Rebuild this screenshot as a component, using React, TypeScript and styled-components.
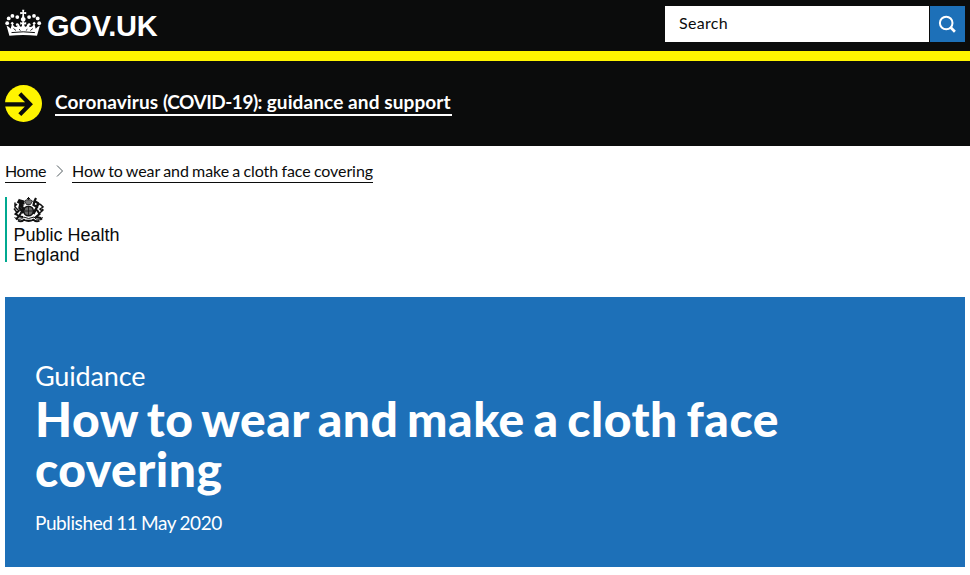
import React from "react";
import styled, { createGlobalStyle } from "styled-components";

const black = "#0b0c0c";
const blue = "#1d70b8";
const yellow = "#fff500";

const GlobalStyle = createGlobalStyle`
  * { box-sizing: border-box; }
  body {
    margin: 0;
    background: #fff;
    color: ${black};
    font-family: Lato, "Liberation Sans", sans-serif;
  }
`;

const Header = styled.header`
  display: flex;
  justify-content: space-between;
  height: 61px;
  padding: 6px 5px 0;
  background: ${black};
  border-bottom: 10px solid ${yellow};
`;

const Logo = styled.a`
  display: flex;
  gap: 5px;
  height: 36px;
  padding-top: 3px;
  color: #fff;
  text-decoration: none;
`;

const LogoText = styled.span`
  font: 700 29px/34px "Liberation Sans", Arial, sans-serif;
  letter-spacing: -0.2px;
`;

const SearchForm = styled.form`
  display: flex;
  gap: 1px;
  height: 36px;
`;

const SearchField = styled.label`
  width: 264px;
  padding-left: 14px;
  background: #fff;
  font-size: 16px;
  line-height: 34px;
  letter-spacing: 0.3px;
`;

const SearchButton = styled.button`
  display: flex;
  align-items: center;
  justify-content: center;
  width: 35px;
  padding: 0;
  border: 0;
  background: ${blue};
`;

const Banner = styled.section`
  display: flex;
  gap: 13px;
  height: 85px;
  padding: 24px 5px 0;
  background: ${black};
`;

const BannerLink = styled.a`
  width: 397px;
  height: 27px;
  margin-top: 4px;
  padding-top: 1px;
  border-bottom: 2px solid #fff;
  color: #fff;
  font-size: 19px;
  font-weight: 700;
  line-height: 24px;
  letter-spacing: 0.1px;
  white-space: nowrap;
`;

const DiseaseName = styled.span`
  letter-spacing: -0.5px;
`;

const Breadcrumbs = styled.nav`
  display: flex;
  height: 51px;
  padding: 15px 5px 0;
`;

const Crumb = styled.a`
  height: 22px;
  border-bottom: 1px solid ${black};
  font-size: 16px;
  line-height: 20px;
`;

const HomeCrumb = styled(Crumb)`
  width: 41px;
  letter-spacing: -0.4px;
`;

const PageCrumb = styled(Crumb)`
  width: 301px;
  letter-spacing: -0.08px;
  word-spacing: -0.7px;
  white-space: nowrap;
`;

const Chevron = styled.svg`
  margin: 4px 8px 0 9px;
`;

const Organisation = styled.div`
  display: flex;
  flex-direction: column;
  width: 130px;
  height: 65px;
  margin: 0 0 35px 5px;
  padding-left: 6px;
  border-left: 2px solid #00a990;
  font: 18px/20px "Liberation Sans", Arial, sans-serif;
`;

const OrganisationLine = styled.span`
  padding-left: 0.4px;
`;

const Crest = styled.svg`
  flex: none;
  margin-bottom: 1px;
`;

const Hero = styled.main`
  height: 270px;
  margin: 0 5px;
  padding: 62px 30px 0;
  background: ${blue};
  color: #fff;
`;

const Kind = styled.p`
  margin: 0;
  font-size: 27px;
  line-height: 34px;
  letter-spacing: -0.15px;
`;

const Title = styled.h1`
  width: 780px;
  margin: 0;
  padding: 1px 0 16px;
  font-size: 48px;
  font-weight: 900;
  line-height: 50px;
  letter-spacing: 0.5px;
  word-spacing: -3.2px;
`;

const Published = styled.p`
  margin: 0;
  font-size: 19px;
  line-height: 26px;
  letter-spacing: -0.4px;
  word-spacing: -0.8px;
`;

function Crown() {
  return (
    <svg width="37" height="28" viewBox="0 0 37 28" fill="#fff" aria-hidden="true">
      <circle cx="2.2" cy="14.2" r="1.900" />
      <circle cx="3.700" cy="9.400" r="1.900" />
      <circle cx="7.4" cy="6.900" r="1.900" />
      <circle cx="12.300" cy="8.100" r="1.900" />
      <circle cx="34.2" cy="14.2" r="1.900" />
      <circle cx="32.700" cy="9.400" r="1.900" />
      <circle cx="29" cy="6.900" r="1.900" />
      <circle cx="24.100" cy="8.100" r="1.900" />
      <path d="M17.100.7h2.200l-.4 2.600 2.300-.4v2.300l-2.300-.4.4 3.400a2.400 2.400 0 1 1-2.200 0l.4-3.400-2.300.4V2.900l2.300.4z" />
      <path d="M1.500 16.500q2.200 1 4.200 3.200l1.100-4.200-1.300-1.200 1.700-1.600 1.700 1.600-1 1.500q1.200 2.500 3.200 2.300 1.600-.2 1.400-2-.6 1.200-1.500.3-.8-1.200.7-2.100 1.800-.7 2.500 1.500.6 2.500 2.300 1.700 1.100-.9.200-2.400l-1.500.6v-2.600l2 .7v-1.400h2v1.400l2-.7v2.600l-1.500-.6q-.9 1.500.2 2.400 1.700.8 2.300-1.700.7-2.200 2.500-1.500 1.500.9.700 2.100-.9.900-1.500-.3-.2 1.800 1.400 2 2 .2 3.200-2.300l-1-1.500 1.700-1.600 1.700 1.600-1.300 1.200 1.100 4.200q2-2.200 4.200-3.200L32 26.800q-13.800-1.800-27.600 0z" />
      <path d="M6.500 23.600q11.700-1.600 23.400 0" stroke={black} fill="none" strokeWidth="1" />
      <path d="M8.500 19.500l2.500 2M14 20.200l1.500 1.300M27.900 19.500l-2.500 2M22.400 20.200l-1.500 1.300" stroke={black} fill="none" strokeWidth=".9" />
    </svg>
  );
}

function SearchIcon() {
  return (
    <svg width="19" height="19" viewBox="0 0 19 19" fill="none" stroke="#fff" aria-hidden="true">
      <circle cx="8.200" cy="8" r="6.300" strokeWidth="2" />
      <path d="m12.500 12.300 4.400 4.400" strokeWidth="2.700" />
    </svg>
  );
}

function ArrowIcon() {
  return (
    <svg width="37" height="38" viewBox="0 0 37 38" fill="none" aria-hidden="true">
      <circle cx="18.500" cy="18.500" r="18.500" fill={yellow} />
      <path d="M0 19.300h25M14.800 8.800 25 19.200 14.800 29.600" stroke={black} strokeWidth="4.200" />
    </svg>
  );
}

function RoyalCrest() {
  return (
    <Crest width="32" height="27" viewBox="0 0 32 27" fill="none" stroke="#111" aria-hidden="true">
      <path d="M15.500 0v3M14 1.500h3" strokeWidth="1" />
      <path d="m11.500 4 2 3.500h4L19.500 4l-2-1.200h-4z" fill="#777" strokeWidth=".8" />
      <circle cx="15.500" cy="14" r="4.800" fill="#666" strokeWidth="1.600" />
      <path d="M15.500 10v8M12 14h7" strokeWidth=".8" />
      <path d="M7 2.500 5.500 5 8 6.500 10 9M6.500 3.500l3.500 1 .5 3M7.500 6.500 6.500 11l4 5M8 8l3 5" strokeWidth="2.500" />
      <path d="M2 5.500v4.500l3 3M1 11.500l3 4M4 7l-2 2" strokeWidth="1.500" />
      <path d="m6.500 13-4 4 3.500 2-3 3.500M8.500 15 6 19.500l4 .5" strokeWidth="2" />
      <path d="m23 1-1.500 3L25 6l1.500 2M21.500 4l-1 4 3.500 2-3 5M25 5l-1 6" strokeWidth="2.200" />
      <path d="m27 7 3 3-3 2 2 2-3.500 3M29 12l1.500 1.500" strokeWidth="1.500" />
      <path d="m23.500 11.500-3 5.500M24 13l2.500 4-3.500 3 4.500 1 1 2" strokeWidth="2.100" />
      <path d="M1.500 20.500q3 3 7 1.500l2-2q5 3 10.500 0l2 2q4 1.500 7-1.500" strokeWidth="1" />
      <path d="M5 23.500q3 2 6-.8 4.500 2.600 9.500 0 3 2.800 6 .8" strokeWidth="1.900" />
      <path d="M12 22.500h7" stroke="#aaa" strokeWidth=".8" />
    </Crest>
  );
}

export default function App() {
  return (
    <>
      <GlobalStyle />
      <Header>
        <Logo>
          <Crown />
          <LogoText>GOV.UK</LogoText>
        </Logo>
        <SearchForm>
          <SearchField>Search</SearchField>
          <SearchButton type="button" aria-label="Search GOV.UK">
            <SearchIcon />
          </SearchButton>
        </SearchForm>
      </Header>
      <Banner>
        <ArrowIcon />
        <BannerLink>
          Coronavirus <DiseaseName>(COVID-19):</DiseaseName> guidance and support
        </BannerLink>
      </Banner>
      <Breadcrumbs>
        <HomeCrumb>Home</HomeCrumb>
        <Chevron width="9" height="12" viewBox="0 0 9 12" fill="none" stroke="#505a5f">
          <path d="m2 .5 5.500 5.500L2 11.500" />
        </Chevron>
        <PageCrumb>How to wear and make a cloth face covering</PageCrumb>
      </Breadcrumbs>
      <Organisation>
        <RoyalCrest />
        <OrganisationLine>Public Health</OrganisationLine>
        <OrganisationLine>England</OrganisationLine>
      </Organisation>
      <Hero>
        <Kind>Guidance</Kind>
        <Title>How to wear and make a cloth face covering</Title>
        <Published>Published 11 May 2020</Published>
      </Hero>
    </>
  );
}
